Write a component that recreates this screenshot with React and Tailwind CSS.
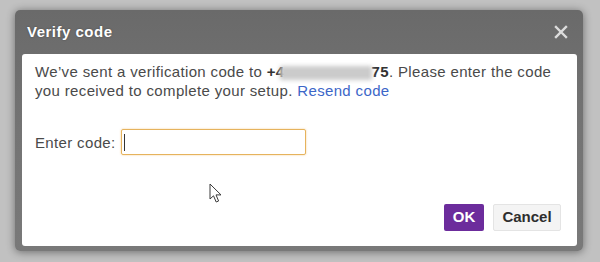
import React from 'react';

const CloseIcon = () => (
  <svg width="14" height="14" viewBox="0 0 14 14" fill="none" stroke="#dcdcdc" strokeWidth="2.4" strokeLinecap="square">
    <path d="M2 2L12 12M12 2L2 12" />
  </svg>
);

const Pointer = () => (
  <svg width="14" height="21" viewBox="0 0 14 21" className="absolute left-[187px] top-[129px]">
    <path d="M1 1L1 16L4.5 12.8L7.2 19L9.6 18L7 11.9L12 11.9Z" fill="#ffffff" stroke="#3a3a3a" strokeWidth="1" strokeLinejoin="round" />
  </svg>
);

export default function App() {
  return (
    <div
      className="w-[600px] h-[262px] bg-[#c1c1c1] pt-[10px] pl-[15px] overflow-hidden"
      style={{ fontFamily: '"Liberation Sans", Arial, sans-serif' }}
    >
      <div className="w-[568px] h-[241px] rounded-[5px] bg-gradient-to-b from-[#6a6a6a] via-[#747474] to-[#797979] shadow-[0_1px_8px_rgba(0,0,0,0.45)] pl-[7px] pr-[6px] pb-[5px] flex flex-col">
        <div className="h-[44px] shrink-0 flex items-center justify-between pl-[5px] pr-[9px]">
          <span className="text-[15px] tracking-[0.5px] font-bold text-white [text-shadow:0_0_2px_rgba(0,0,0,0.35)]">Verify code</span>
          <CloseIcon />
        </div>

        <div className="relative flex-1 bg-white rounded-[3px] px-[13px] pt-[8px] pb-[15px] flex flex-col">
          <p className="text-[15px] tracking-[0.35px] leading-[19px] text-[#4a4a4a]">
            We’ve sent a verification code to{' '}
            <b className="text-[#333]">+4</b>
            <span className="inline-block align-middle w-[92px] h-[14px] -ml-[5px] bg-[#cbcbcb] blur-[2px]" />
            <b className="text-[#333]">75</b>. Please enter the code you received to complete your setup.{' '}
            <a className="text-[#3c66c8]">Resend code</a>
          </p>

          <div className="mt-[29px] flex items-center gap-[5px]">
            <span className="text-[15px] tracking-[0.35px] leading-[19px] text-[#4a4a4a]">Enter code:</span>
            <div className="w-[185px] h-[26px] rounded-[2px] border border-[#e6b35d] shadow-[0_0_2px_rgba(236,180,90,0.7)] flex items-center pl-[2px]">
              <span className="w-[1.5px] h-[17px] bg-[#333]" />
            </div>
          </div>

          <div className="mt-auto self-end mr-[3px] flex gap-[9px]">
            <button className="w-[40px] h-[27px] rounded-[2px] bg-[#6c2c9c] text-white text-[15px] font-bold">OK</button>
            <button className="w-[68px] h-[27px] rounded-[2px] bg-[#f4f4f4] border border-[#e4e4e4] text-[#2e2e2e] text-[15px] font-bold">Cancel</button>
          </div>

          <Pointer />
        </div>
      </div>
    </div>
  );
}
